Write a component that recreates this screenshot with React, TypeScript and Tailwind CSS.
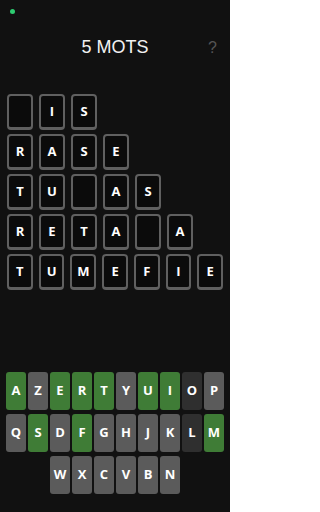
import React from "react"

const rows: string[][] = [
  ["", "I", "S"],
  ["R", "A", "S", "E"],
  ["T", "U", "", "A", "S"],
  ["R", "E", "T", "A", "", "A"],
  ["T", "U", "M", "E", "F", "I", "E"],
]

const keyRows = ["AZERTYUIOP", "QSDFGHJKLM", "WXCVBN"]
const greenKeys = "AERTUISFM"
const darkKeys = "OL"

function keyColor(k: string) {
  if (greenKeys.includes(k)) return "bg-[#3f7c36]"
  if (darkKeys.includes(k)) return "bg-[#2f2f2f]"
  return "bg-[#5b5b5b]"
}

export default function App() {
  return (
    <div
      className="flex h-[512px] w-[230px] flex-col bg-[#111111] text-white"
      style={{ fontFamily: '"Open Sans", "Liberation Sans", sans-serif' }}
    >
      {/* Header */}
      <div className="relative h-[94px] shrink-0">
        <span className="absolute left-[10px] top-[9px] h-[5px] w-[5px] rounded-full bg-[#2ecc71]" />
        <div className="flex justify-center pt-[38px]">
          <h1
            className="text-[18px] leading-[18px] text-[#f2f2f2]"
            style={{ fontFamily: '"Liberation Sans", Arial, sans-serif' }}
          >
            5 MOTS
          </h1>
        </div>
        <span
          className="absolute right-[13px] top-[40px] text-[16px] leading-[16px] text-[#555555]"
          style={{ fontFamily: '"Liberation Sans", Arial, sans-serif' }}
        >
          ?
        </span>
      </div>

      {/* Grid */}
      <div className="flex flex-col gap-[4px] px-[7px]">
        {rows.map((row, i) => (
          <div key={i} className="flex gap-[6px]">
            {row.map((l, j) => (
              <div
                key={j}
                className="flex h-[36px] w-[26px] items-center justify-center rounded-[4px] border-2 border-b-[3px] border-[#606060] bg-[#0b0b0b] text-[13px] font-bold"
              >
                {l}
              </div>
            ))}
          </div>
        ))}
      </div>

      {/* Keyboard */}
      <div className="mt-auto flex flex-col gap-[4px] px-[6px] pb-[18px]">
        {keyRows.map((r) => (
          <div key={r} className="flex justify-center gap-[2px]">
            {r.split("").map((k) => (
              <div
                key={k}
                className={`flex h-[38px] w-[20px] items-center justify-center rounded-[3px] text-[13px] font-bold text-white ${keyColor(k)}`}
              >
                {k}
              </div>
            ))}
          </div>
        ))}
      </div>
    </div>
  )
}
